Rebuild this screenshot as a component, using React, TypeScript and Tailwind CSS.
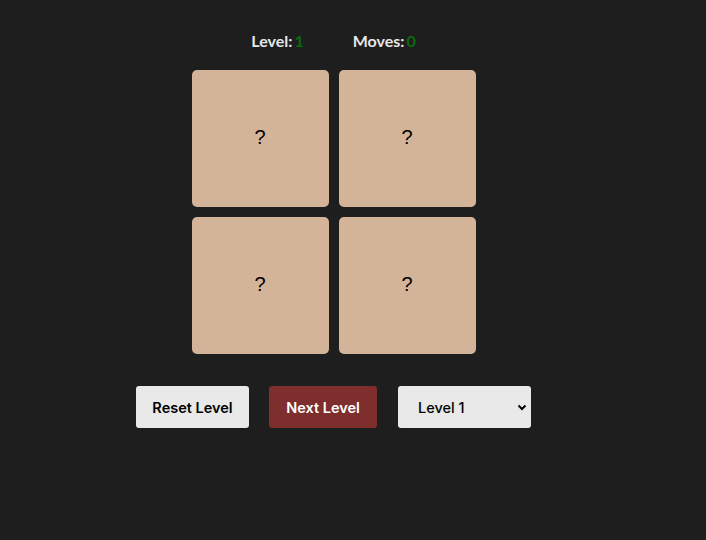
import { useState } from 'react';

const levels = [1, 2, 3, 4, 5];

const App = () => {
  const [level, setLevel] = useState(1);
  const [moves] = useState(0);
  const cards = Array.from({ length: 4 }, (_, i) => i);

  return (
    <div className="min-h-[540px] w-full bg-[#1e1e1e]">
      <div className="w-[667px] flex flex-col items-center pt-[31px]">
        {/* Score */}
        <div className="flex gap-[49px] text-[16px] font-bold text-[#e6e6e6] [font-family:Lato,'DejaVu_Sans',sans-serif] leading-[20px]">
          <div>
            Level:<span className="ml-[2px] text-[#0a6b0a]">{level}</span>
          </div>
          <div>
            Moves:<span className="ml-[2px] text-[#0a6b0a]">{moves}</span>
          </div>
        </div>

        {/* Board */}
        <div className="mt-[19px] grid grid-cols-2 gap-[10px]">
          {cards.map(card => (
            <div
              key={card}
              className="w-[137px] h-[137px] rounded-[5px] bg-[#d4b499] flex items-center justify-center pb-[4px] text-[20px] text-black [font-family:'Liberation_Sans',Arial,sans-serif]"
            >
              ?
            </div>
          ))}
        </div>

        {/* Controls */}
        <div className="mt-[32px] flex items-center gap-5 [font-family:Inter,'Noto_Sans',sans-serif] text-[14.5px] font-semibold">
          <button className="h-[42px] w-[113px] pt-[2px] rounded-[3px] bg-[#e8e9e8] text-black">
            Reset Level
          </button>
          <button className="h-[42px] w-[108px] pt-[2px] rounded-[3px] bg-[#7f2e2e] text-white">
            Next Level
          </button>
          <div className="relative ml-[1px]">
            <select
              value={level}
              onChange={e => setLevel(Number(e.target.value))}
              className="appearance-none h-[42px] w-[133px] pt-[2px] rounded-[3px] bg-[#e8e9e8] pl-5 text-black font-medium outline-none"
            >
              {levels.map(l => (
                <option key={l} value={l}>Level {l}</option>
              ))}
            </select>
            <svg
              className="absolute right-[4px] top-1/2 -translate-y-1/2 pointer-events-none"
              width="10"
              height="10"
              viewBox="0 0 10 10"
              fill="none"
            >
              <path d="M1.5 3.5 L5 7 L8.5 3.5" stroke="black" strokeWidth="2" />
            </svg>
          </div>
        </div>
      </div>
    </div>
  );
};

export default App;
